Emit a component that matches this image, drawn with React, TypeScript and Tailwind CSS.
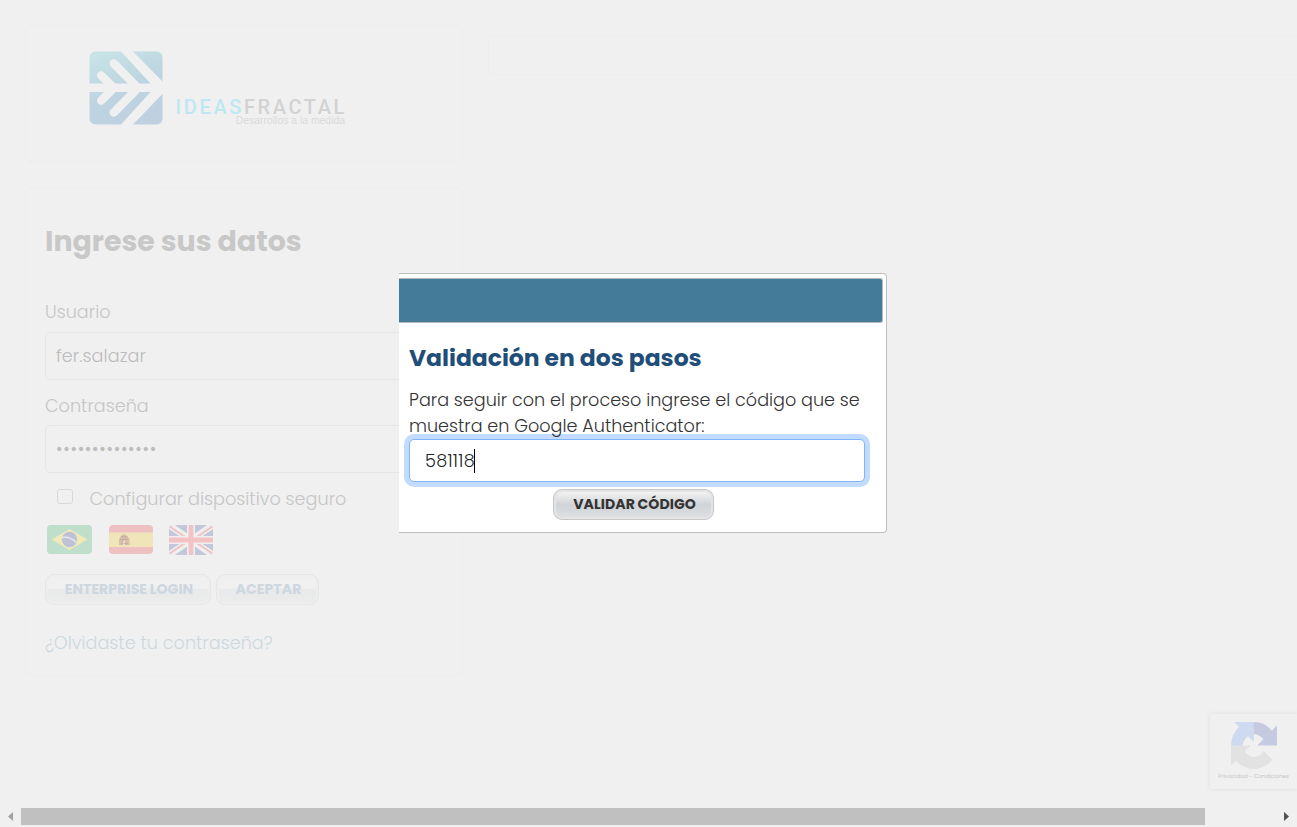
import React from 'react';

const Logo = () => (
  <svg width="74" height="74" viewBox="-0.5 -0.5 74 74" className="shrink-0">
    <defs>
      <linearGradient id="logoFill" x1="0.2" y1="0" x2="0.65" y2="1">
        <stop offset="0" stopColor="#c6e3e6" />
        <stop offset="0.5" stopColor="#bdd5e0" />
        <stop offset="1" stopColor="#bfd0e1" />
      </linearGradient>
    </defs>
    <rect width="73" height="73" rx="6" fill="url(#logoFill)" />
    <rect x="-0.5" y="32" width="74" height="8.5" fill="#f0f0f0" />
    <path d="M31 -0.5H43L73.5 30.500V42L43 73.500H31L61 40.500V32Z" fill="#f0f0f0" />
    <g stroke="#f0f0f0" strokeWidth="8.4" strokeLinecap="round">
      <path d="M24.3 12L46 34M11.7 24L22 34M24.3 61L46 39M11.7 49L22 39" />
    </g>
  </svg>
);

const BrazilFlag = () => (
  <svg width="45" height="29" viewBox="0 0 45 29">
    <rect width="45" height="29" rx="4" fill="#bfdecb" />
    <path d="M4.5 14.5L22.5 4L40.500 14.500L22.500 25Z" fill="#f0e9b9" />
    <circle cx="22.500" cy="14.500" r="7.700" fill="#bdc2d6" />
    <path d="M15.300 12.500Q23 11 29.300 17.500" stroke="#e4e8ec" strokeWidth="1.500" fill="none" />
  </svg>
);

const SpainFlag = () => (
  <svg width="44" height="29" viewBox="0 0 44 29">
    <rect width="44" height="29" rx="4" fill="#edc1c2" />
    <rect y="7.500" width="44" height="14.500" fill="#f0e5b9" />
    <path d="M10 20V14L12 10.500L15 9L18 10.500L20.500 14V20H17V15.500H13V20Z" fill="#d9c2a8" />
    <path d="M12.500 11.500H18M11 14.500H19.500M12 18.500H19" stroke="#c9a6a4" strokeWidth="1" strokeDasharray="2 1" />
    <path d="M13.500 12.500V20M17 12V20" stroke="#cbb2aa" strokeWidth="1.500" />
  </svg>
);

const UkFlag = () => (
  <svg width="44" height="30" viewBox="0 0 44 30">
    <defs>
      <clipPath id="ukRound"><rect width="44" height="30" rx="4" /></clipPath>
    </defs>
    <g clipPath="url(#ukRound)">
      <rect width="44" height="30" fill="#c2c8d8" />
      <path d="M0 0L44 30M44 0L0 30" stroke="#efeff0" strokeWidth="6.500" />
      <path d="M0 1L19 14M25 16L44 29M44 1L25 14M19 16L0 29" stroke="#f0c3c5" strokeWidth="2" />
      <path d="M22 0V30M0 15H44" stroke="#f0eff0" strokeWidth="8" />
      <path d="M22 0V30M0 15H44" stroke="#f3c2c4" strokeWidth="4.800" />
    </g>
  </svg>
);

const RecaptchaLogo = () => (
  <svg width="46" height="47" viewBox="0 0 64 64" preserveAspectRatio="none">
    <path fill="#c5cae0" d="M64 31.955l-.033-1.370V4.687l-7.160 7.160C50.948 4.674 42.033.093 32.050.093c-10.400 0-19.622 4.960-25.458 12.640l11.736 11.860a15.550 15.550 0 0 1 4.754-5.334c2.050-1.600 4.952-2.906 8.968-2.906.485 0 .860.057 1.135.163 4.976.393 9.288 3.140 11.828 7.124l-8.307 8.307L64 31.953" />
    <path fill="#cddaf0" d="M31.862.094l-1.370.033H4.594l7.160 7.160C4.580 13.147 0 22.060 0 32.046c0 10.400 4.960 19.622 12.640 25.458L24.500 45.768a15.550 15.550 0 0 1-5.334-4.754c-1.600-2.050-2.906-4.952-2.906-8.968 0-.485.057-.860.163-1.135.393-4.976 3.140-9.288 7.124-11.828l8.307 8.307L31.860.095" />
    <path fill="#e2e2e2" d="M.001 32.045l.033 1.370v25.898l7.160-7.160c5.860 7.173 14.774 11.754 24.760 11.754 10.400 0 19.622-4.960 25.458-12.640l-11.736-11.860a15.550 15.550 0 0 1-4.754 5.334c-2.050 1.600-4.952 2.906-8.968 2.906-.485 0-.860-.057-1.135-.163-4.976-.393-9.288-3.140-11.828-7.124l8.307-8.307c-10.522.040-22.400.066-27.295-.005" />
  </svg>
);

const label = 'flex h-6 items-center whitespace-nowrap text-[17.6px] font-light leading-6 tracking-[0.035px] text-[#c6c6c6]';
const field = 'flex h-12 items-center rounded-[5px] border border-[#e6e6e6] pl-2.5 text-[17.6px] font-light text-[#bcbcbc]';
const paleButton =
  'flex h-[31px] items-center justify-center whitespace-nowrap rounded-[9px] border border-[#e6e6e6] bg-linear-to-b from-[#f0f0f0] from-45% via-[#e8e9ea] via-50% to-[#ececec] text-[14.08px] font-bold tracking-[0.06px] text-[#ccd7df] shadow-[inset_0_0_0_2px_#eeeeee] [word-spacing:-0.4px]';

export default function App() {
  return (
    <div className="relative flex h-[827px] w-[1297px] flex-col overflow-hidden bg-[#f0f0f0] font-['Poppins','Inter',sans-serif]">
      <main className="flex min-h-0 flex-1 items-start pl-[25px] pt-[25px]">
        <div className="flex w-[438px] shrink-0 flex-col gap-[25px]">
          <section className="flex h-[137px] items-start rounded-lg border border-[#ededed] pl-[63px] pt-[25px]">
            <Logo />
            <div className="ml-[8px] flex w-[176px] flex-col items-end pt-[46px]">
              <div className="whitespace-nowrap font-['Roboto',sans-serif] text-[20px] font-medium leading-[20px] tracking-[2.6px] text-[#d2d2d2]">
                <span className="text-[#bfe7f2]">IDEAS</span>FRACTAL
              </div>
              <div className="-mt-px mr-[2px] whitespace-nowrap font-['Liberation_Sans',sans-serif] text-[10.4px] leading-[10px] text-[#dadada]">Desarrollos a la medida</div>
            </div>
          </section>

          <section className="flex h-[489px] flex-col rounded-lg border border-[#ededed] pl-[19px] pr-[19px] pt-8">
            <h2 className="flex h-[42px] items-center whitespace-nowrap text-[28.4px] font-bold text-[#c8c8c8]">Ingrese sus datos</h2>
            <div className={label + ' mt-[38px]'}>Usuario</div>
            <div className={field + ' mt-2 tracking-[0.08px]'}>fer.salazar</div>
            <div className={label + ' mt-[14px]'}>Contraseña</div>
            <div className={field + ' mt-[7px] tracking-[0.77px]'}>••••••••••••••</div>
            <div className={label + ' mt-[14px]'}>
              <span className="mb-[5px] ml-3 mr-[17px] size-[15.500px] rounded-[3px] border border-[#d9d9d9]" />
              Configurar dispositivo seguro
            </div>
            <div className="mt-[14px] flex h-[29px] pl-[2px]">
              <BrazilFlag />
              <div className="ml-[17px]"><SpainFlag /></div>
              <div className="ml-[16px]"><UkFlag /></div>
            </div>
            <div className="mt-5 flex gap-[5px]">
              <button className={paleButton + ' w-[166px] pl-0.5'}>ENTERPRISE LOGIN</button>
              <button className={paleButton + ' w-[103px] pl-0.5'}>ACEPTAR</button>
            </div>
            <a className="mt-[26px] flex h-6 items-center whitespace-nowrap pt-px text-[17.6px] font-light tracking-[0.03px] text-[#ccd8df]">¿Olvidaste tu contraseña?</a>
          </section>
        </div>
        <div className="ml-[25px] mt-[10px] h-10 flex-1 self-start rounded-l-[5px] border border-r-0 border-[#ededed]" />
      </main>

      <footer className="flex h-[19px] shrink-0 items-start">
        <div className="flex h-[17px] w-[21px] items-center pl-2">
          <svg width="5" height="9" viewBox="0 0 5 9"><path d="M5 0V9L0 4.500Z" fill="#a3a3a3" /></svg>
        </div>
        <div className="h-[17px] w-[1184px] bg-[#c0c0c0]" />
        <div className="flex h-[17px] flex-1 items-center justify-end pr-2">
          <svg width="5" height="9" viewBox="0 0 5 9"><path d="M0 0V9L5 4.500Z" fill="#505050" /></svg>
        </div>
      </footer>

      <aside className="absolute left-[1210px] top-[714px] flex h-[75px] w-[87px] flex-col items-center rounded-l-[3px] pt-2 shadow-[0_0_4px_#dcdcdc]">
        <RecaptchaLogo />
        <span className="mt-[3px] whitespace-nowrap text-[5.6px] leading-2 text-[#c6c6c6]">Privacidad - Condiciones</span>
      </aside>

      <div role="dialog" className="absolute left-[399px] top-[273px] flex h-[260px] w-[488px] flex-col rounded-r-[4px] border border-l-0 border-[#bfbfbf] bg-white pr-[3px] pt-1">
        <div className="h-[45px] shrink-0 rounded-r-[3px] border border-l-0 border-[#b4b8ba] bg-[#447b98]" />
        <div className="flex flex-col pl-2.5">
          <h3 className="mt-[19px] flex h-8 items-center whitespace-nowrap text-[23.46px] font-bold text-[#1f4e79]">Validación en dos pasos</h3>
          <p className="relative z-10 mt-[13px] whitespace-nowrap text-[17.6px] font-light leading-[26px] text-[#333]">
            Para seguir con el proceso ingrese el código que se<br />muestra en Google Authenticator:
          </p>
          <div className="flex h-[43px] w-[456px] items-center rounded-[5px] border border-[#80b4fb] bg-white pl-[15px] text-[17.6px] font-light text-[#212529] shadow-[0_0_0_5px_#c2dbfe]">
            <span className="pt-0.5 tracking-[0.3px]">581118</span>
            <span className="-ml-px h-6 w-px bg-black" />
          </div>
          <button className="ml-[144px] mt-[7px] flex h-[31px] w-[161px] items-center justify-center whitespace-nowrap rounded-[9px] border border-[#c6c6c6] bg-linear-to-b from-[#f4f4f4] from-5% via-[#d0d3d7] via-52% to-[#dfe1e4] pl-0.5 text-[14.08px] font-bold tracking-[0.06px] text-[#333] shadow-[inset_0_0_0_2px_#e4e4e5] [word-spacing:-0.4px]">
            VALIDAR CÓDIGO
          </button>
        </div>
      </div>
    </div>
  );
}
